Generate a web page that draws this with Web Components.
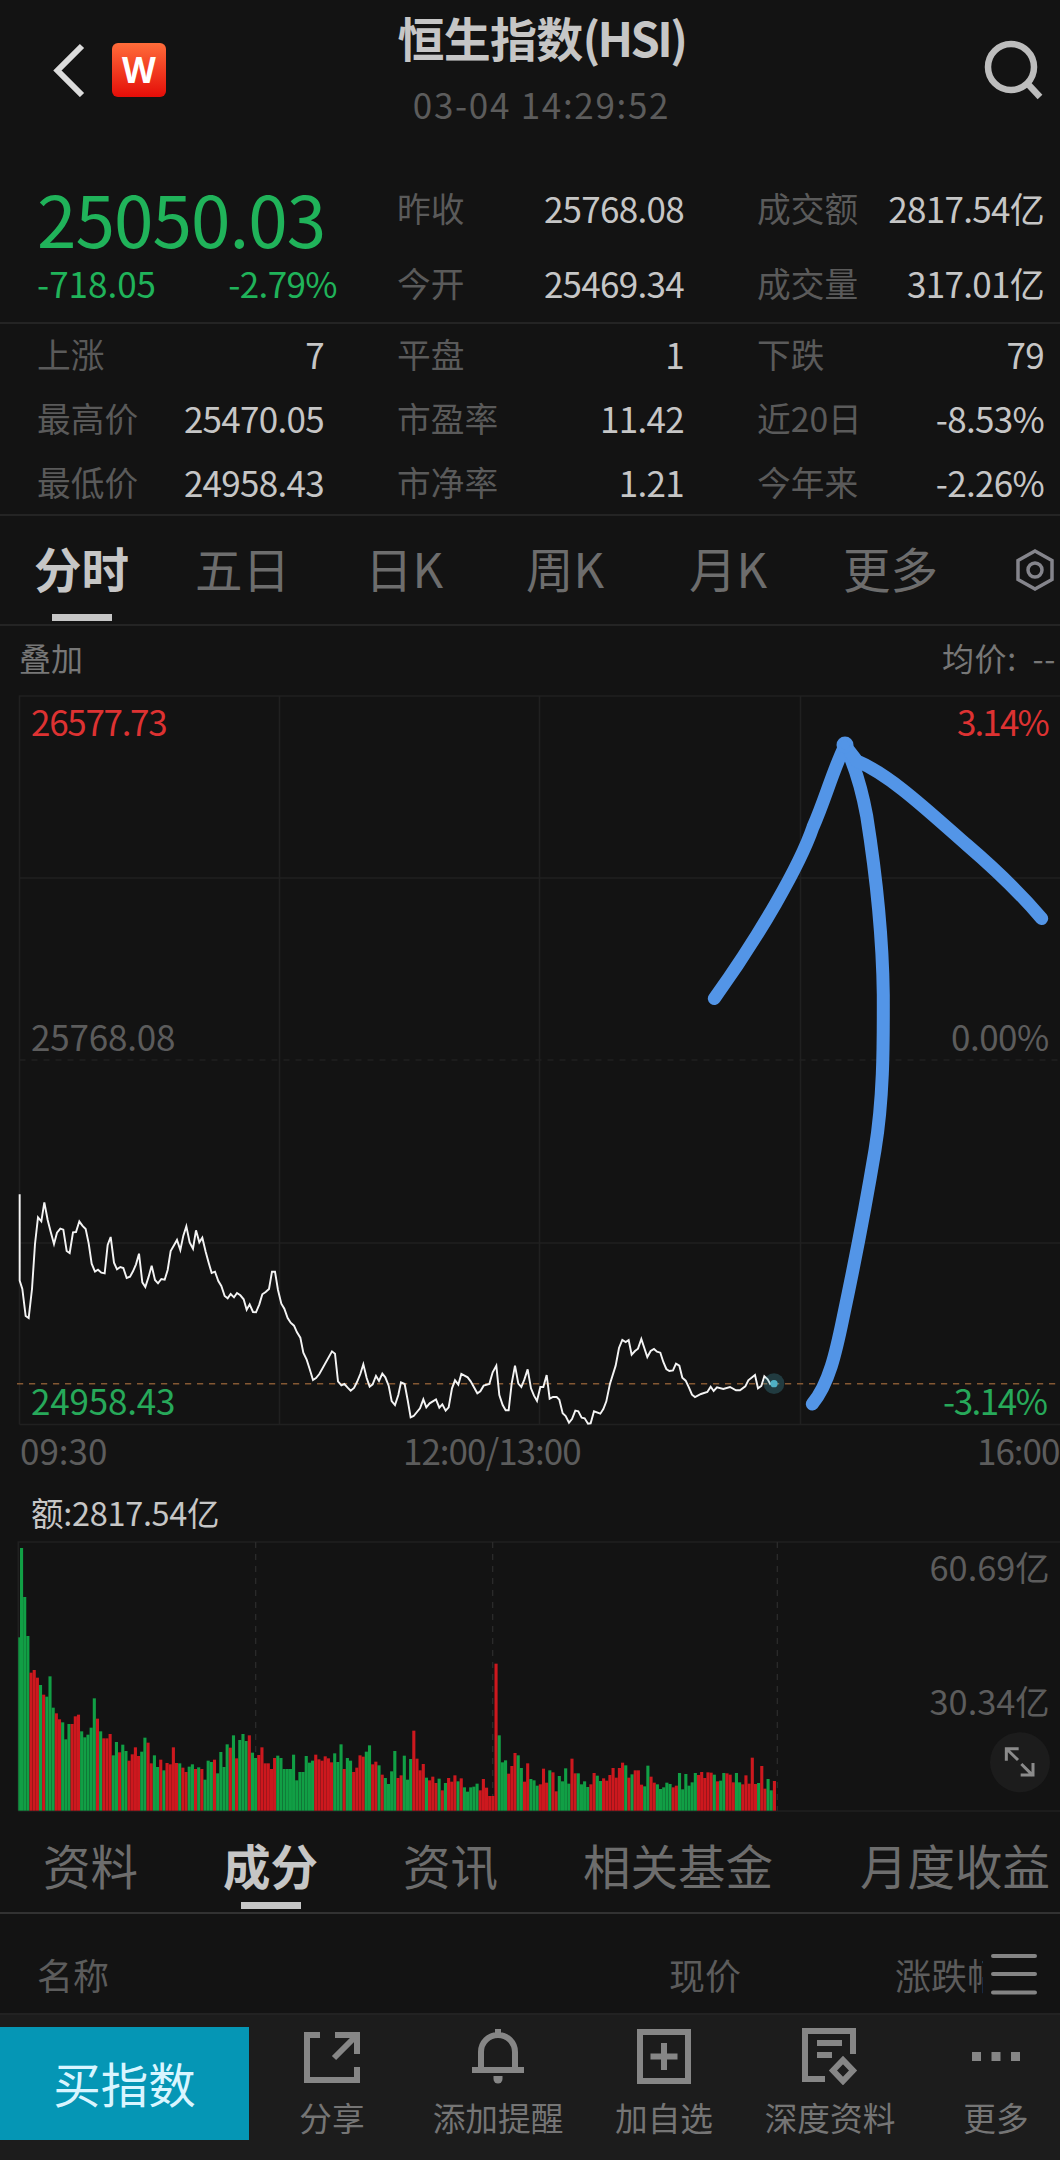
<!DOCTYPE html>
<html lang="zh-CN">
<head>
<meta charset="utf-8">
<title>恒生指数(HSI)</title>
<style>
	body {
		margin: 0;
		width: 1060px;
		height: 2160px;
		overflow: hidden;
		background: #131313;
		color: #c6c6c6;
		font-family: "Noto Sans CJK SC", "Noto Sans", sans-serif;
		font-size: 35px;
	}
</style>
</head>
<body>

<index-page></index-page>

<script>
// === HELPERS ===

function define(name, render){
	customElements.define(name, class extends HTMLElement {
		connectedCallback(){
			const shadow = this.attachShadow({ mode: 'open' })
			shadow.innerHTML = `<style>* { box-sizing: border-box; }</style>` + render(this)
		}
	})
}

// === DATA ===

// price polyline, in thirds of a pixel
const pricePoints = `59,103 59,362 67,387 77,468 86,474 96,387 105,252 114,172 124,184 133,127 143,180 152,215 162,252
171,218 181,206 190,209 200,273 209,279 219,217 228,216 238,184 247,197 257,207 266,250 275,311 285,335 294,329 304,338
314,340 323,255 332,231 342,308 351,328 361,321 370,324 380,354 390,350 399,334 408,313 417,281 427,367 436,381 446,350
455,317 465,360 474,370 484,357 494,359 503,330 512,273 522,256 531,240 541,270 550,227 559,199 569,247 579,266 588,211
598,247 607,233 617,275 626,308 635,339 645,335 655,363 664,378 674,408 683,415 692,402 702,412 711,399 721,406 731,418
740,449 749,433 759,456 768,457 778,433 787,403 797,396 807,387 816,335 825,335 834,390 844,431 853,446 863,474 872,488
882,497 891,517 901,533 910,578 920,599 929,627 939,660 948,654 958,642 996,574 1005,581 1014,664 1024,676 1033,672
1043,683 1052,692 1062,684 1071,666 1081,642 1090,613 1100,654 1109,680 1118,673 1128,648 1137,663 1147,641 1156,652
1166,677 1175,723 1185,735 1195,705 1203,667 1214,672 1223,720 1232,772 1241,768 1260,745 1270,718 1279,742 1289,730
1308,718 1318,743 1327,733 1337,752 1346,742 1356,685 1365,661 1375,674 1384,642 1403,652 1412,664 1432,700 1441,694
1451,677 1468,672 1478,637 1489,617 1498,705 1508,735 1517,751 1526,751 1535,671 1545,617 1555,671 1564,681 1573,659
1583,628 1593,685 1602,707 1611,723 1621,681 1630,681 1640,645 1649,716 1659,711 1670,711 1678,719 1688,760 1697,768
1707,788 1716,777 1726,752 1735,754 1745,773 1754,775 1764,791 1772,790 1782,754 1801,761 1810,747 1819,724 1830,671
1847,617 1857,564 1867,540 1877,546 1886,540 1895,584 1905,573 1914,566 1924,537 1942,591 1952,573 1962,567 1971,575
1981,578 1990,606 1999,627 2008,633 2019,631 2028,611 2038,617 2047,653 2057,662 2067,683 2076,704 2085,711 2103,702
2122,696 2132,680 2141,693 2151,682 2170,687 2190,681 2208,691 2220,691 2236,679 2245,661 2265,645 2274,685 2284,678
2293,649 2303,658 2312,674`

// one bar per minute: g = down, r = up, number is the top edge (the base is at 992)
const volumeBars = `g472 g204 g351 g468 r578 r570 r593 g615 r644 g650 g589 g683 r700 r718 g727 g778 g732 r732 r709 r704
g754 g772 g764 g743 g655 r716 g754 r775 r775 r762 g826 g786 r817 g794 g813 r842 r823 r802 r828 g815
g773 r788 r850 g826 g861 r839 g871 r849 r853 r802 r849 g850 r863 r876 g860 g853 r867 g862 r867 g899
g842 g846 r839 g880 g816 g861 g793 r803 g766 r835 g780 g762 g783 r766 g818 g834 r825 r802 r850 r850
r867 r834 g827 g834 g867 g867 g867 g824 g901 g876 g876 g828 g848 g842 r824 r838 r842 r829 r835 r847
g820 g846 g793 r867 g834 g842 r876 r863 r826 r830 g815 g796 r853 r845 g856 r884 g894 g912 g874 g813
r894 r886 g827 g899 g837 r752 r836 r871 r852 g893 r901 r890 r909 g896 r931 g909 r894 r905 r886 g904
r895 g922 g935 g922 g920 g911 r931 r897 r923 r948 r948 r551 g766 g847 g841 r881 r858 r819 g826 g864
r905 r850 g897 g901 g917 r913 r866 r908 g871 r877 r934 g888 g904 g865 g911 r836 r880 g880 g913 g904
g921 r913 r879 g887 g903 r895 r902 r885 r864 r893 r864 r848 g856 r893 g883 r871 r871 r914 g919 g857
r890 r908 g913 g927 g922 g908 g912 r922 r917 g879 g928 g882 g917 g907 g879 r885 r876 r894 r877 r878
g884 r904 g902 g879 r880 r884 r907 g879 g907 r913 r886 r911 r833 r912 g909 r858 r926 g897 g931 r903`.split(/\s+/)

// === ICONS ===

const icons = {
	share: `<path d="M18 10H5V55H55V42M33 10H55V29M53 12L32 33"/>`,
	bell: `<path d="M13 45V27a17 17 0 0 1 34 0V45M4 45H56M30 4V11"/><path d="M25.500 51h9v3a4.500 4.500 0 0 1-9 0z" fill="currentColor" stroke="none"/>`,
	plus: `<path d="M6 7H54V56H6zM30 18V45M16.500 31.500H43.500"/>`,
	report: `<path d="M53 29V6H5V54H25M17 18H42M17 30H32M43 35L53 45.500 43 56 33 45.500z"/>`,
	more: `<path d="M6 27h9v9H6zM25.500 27h9v9h-9zM45 27h9v9h-9z" fill="currentColor" stroke="none"/>`
}

// === TOP BAR ===

define('top-bar', () => `
	<style>
		:host {
			display: grid;
			grid-template-columns: 223px 1fr 200px;
			height: 142px;
		}
		.left { display: flex; align-items: flex-start; padding: 43px 0 0 50px; gap: 26px; }
		.badge {
			width: 54px;
			height: 54px;
			border-radius: 6px;
			background: linear-gradient(#ff6c3a, #e40d08);
			color: #fff;
			font: bold 35px/53px "Open Sans", sans-serif;
			text-align: center;
		}
		.middle { text-align: center; padding-top: 9px; white-space: nowrap; }
		.title { font-weight: 700; font-size: 47px; line-height: 56px; letter-spacing: -.8px; }
		.time { margin-top: 19px; line-height: 40px; color: #5c5c5c; letter-spacing: 1.7px; }
		.right { display: flex; justify-content: flex-end; padding: 38px 14px 0 0; }
	</style>
	<div class="left">
		<svg width="36" height="54" fill="none" stroke="#dcdcdc" stroke-width="6"><path d="M32 3L7.500 27.500 32 52"/></svg>
		<div class="badge">W</div>
	</div>
	<div class="middle">
		<div class="title"><slot name="title"></slot></div>
		<div class="time"><slot name="time"></slot></div>
	</div>
	<div class="right">
		<svg width="64" height="64" fill="none" stroke="#bdbdbd" stroke-width="6.500"><circle cx="29" cy="29" r="23"/><path d="M45 45L58 59"/></svg>
	</div>`)

// === STATS ===

define('stat-item', host => `
	<style>
		:host { display: flex; justify-content: space-between; align-items: center; white-space: nowrap; }
		.label { color: #5a5a5a; font-size: 33.700px; }
		.value { letter-spacing: -.7px; }
	</style>
	<span class="label">${host.getAttribute('label')}</span>
	<span class="value"><slot></slot></span>`)

define('stat-grid', () => `
	<style>
		:host {
			display: grid;
			grid-template-columns: repeat(3, 287px);
			grid-auto-rows: var(--row, 64px);
			column-gap: 73px;
			align-content: start;
			box-sizing: border-box;
			padding-left: 37px;
			border-bottom: 2px solid #242424;
		}
	</style>
	<slot></slot>`)

define('last-price', () => `
	<style>
		:host { display: block; grid-row: span 2; color: #20b35a; white-space: nowrap; }
		.price { margin-top: 10px; font-size: 71px; line-height: 75px; letter-spacing: -.9px; }
		.change { display: flex; justify-content: space-between; width: 300px; line-height: 56px; }
	</style>
	<div class="price"><slot name="price"></slot></div>
	<div class="change"><slot name="change"></slot><span style="letter-spacing:-.6px"><slot name="percent"></slot></span></div>`)

// === TABS ===

define('tab-item', () => `
	<style>
		:host { display: block; color: #6d6d6d; font-size: 47.500px; white-space: nowrap; }
		:host([active]) { color: #c6c6c6; font-weight: 700; }
		.tab { display: inline-flex; flex-direction: column; align-items: center; line-height: 72px; }
		:host([active]) .tab::after {
			content: "";
			width: 60px;
			height: 7px;
			margin-top: var(--bar-gap, 10px);
			background: #c6c6c6;
		}
	</style>
	<div class="tab"><span><slot></slot></span></div>`)

define('tab-bar', () => `
	<style>
		:host {
			display: grid;
			box-sizing: border-box;
			border-bottom: 2px solid var(--line, #242424);
		}
	</style>
	<slot></slot>`)

// === CHARTS ===

define('chart-caption', () => `
	<style>
		:host { display: flex; justify-content: space-between; height: 64px; line-height: 63px; font-size: 32px; color: #777; white-space: nowrap; overflow: hidden; }
		.average { width: 118px; word-spacing: 8px; letter-spacing: .6px; }
	</style>
	<span style="padding-left:19px"><slot></slot></span>
	<span class="average"><slot name="average"></slot></span>`)

define('price-chart', () => `
	<style>
		:host { display: block; }
		svg { display: block; }
		.grid { stroke: #202020; stroke-width: 1.500; fill: none; }
		.times { display: grid; grid-template-columns: 383px 574px 1fr; height: 50px; line-height: 40px; color: #5c5c5c; padding-left: 20px; white-space: nowrap; letter-spacing: -1px; }
		.times span:first-child { letter-spacing: 0; }
	</style>
	<svg width="1060" height="740" viewBox="0 690 1060 740">
		<path class="grid" d="M19.500 1424.500V696H1060M19.500 878H1060M19.500 1243H1060M19.500 1424.500H1060M279.500 696V1424.500M539.500 696V1424.500M800.500 696V1424.500"/>
		<path class="grid" d="M19.500 1060H1060" stroke-dasharray="6 6"/>
		<path d="M17 1383.700H1060" stroke="#845833" stroke-width="1.600" stroke-dasharray="6.200 5.800"/>
		<g transform="translate(0 1160) scale(.33333)">
			<polyline points="${pricePoints}" fill="none" stroke="#f4f4f4" stroke-width="5.800"/>
			<circle cx="2322" cy="671" r="31" fill="#4db2c6" fill-opacity=".25"/>
			<circle cx="2322" cy="671" r="11" fill="#4fb0c4"/>
		</g>
		<g font-size="35">
			<text x="31" y="736" fill="#dd3232" letter-spacing="-1.300">26577.73</text>
			<text x="31" y="1050.500" fill="#5c5c5c" letter-spacing="-.200">25768.08</text>
			<text x="31" y="1415" fill="#27a95a" letter-spacing="-.200">24958.43</text>
			<text x="957" y="736" fill="#dd3232" letter-spacing="-1.900">3.14%</text>
			<text x="951" y="1050.500" fill="#5c5c5c" letter-spacing="-.500">0.00%</text>
			<text x="943" y="1415" fill="#27a95a" letter-spacing="-1.500">-3.14%</text>
		</g>
		<g fill="none" stroke="#5395e7" stroke-width="13" stroke-linecap="round" stroke-linejoin="round">
			<path d="M812.300 1404C829 1384 836 1352 843 1318C850 1285 865 1210 875 1150C884 1095 883.300 1040 883.300 995C882.500 930 874 862 866.700 816C861 785 854 764 845 745.500"/>
			<path d="M714.300 998.500C760 935 800 865 813 827C825 800 833 770 845 745.500"/>
			<path d="M845 745.500L857 761C890 775 925 808 967 845C995 869 1020 893 1041.700 918.500"/>
			<circle cx="845" cy="745" r="2"/>
		</g>
	</svg>
	<div class="times"><span>09:30</span><span>12:00/13:00</span><span>16:00</span></div>`)

define('volume-chart', () => {
	const pitch = 9.49
	const bars = volumeBars.map((bar, i) => {
		// first bar is cut by the left axis
		const x = Math.max(55, 60 + (i - 1) * pitch)
		const right = 60 + i * pitch - .2
		const y = Number(bar.slice(1))
		const color = bar[0] === 'g' ? '#119f45' : '#cd181e'
		return `<rect x="${x.toFixed(1)}" y="${y}" width="${(right - x).toFixed(1)}" height="${992 - y}" fill="${color}"/>`
	}).join('')

	return `
	<style>
		:host { display: block; }
		.total { height: 61px; line-height: 63px; padding-left: 31px; font-size: 32.500px; }
		.total span { letter-spacing: -.3px; }
		svg { display: block; }
	</style>
	<div class="total"><span><slot></slot></span></div>
	<svg width="1060" height="272" viewBox="0 183 3180 816">
		<path d="M55 992V186H3180M55 993H3180" fill="none" stroke="#202020" stroke-width="5"/>
		<path d="M767 186V992M1478 186V992M2332 186V992" stroke="#2a2a2a" stroke-width="4" stroke-dasharray="18 18"/>
		${bars}
		<g font-size="103" fill="#5c5c5c" text-anchor="end">
			<text x="3149" y="304">60.69亿</text>
			<text x="3149" y="706">30.34亿</text>
		</g>
		<circle cx="3060" cy="847" r="90" fill="#1c1c1c"/>
		<path d="M3056 806H3019V842M3020 807L3054 840M3064 852L3099 887M3062 885H3099V849" fill="none" stroke="#8b8b8b" stroke-width="9"/>
	</svg>`
})

// === TABLE HEAD ===

define('table-head', () => `
	<style>
		:host {
			display: grid;
			grid-template-columns: 632px 226px 88px 1fr;
			align-items: center;
			height: 99px;
			box-sizing: border-box;
			padding: 21px 0 0 37px;
			color: #5c5c5c;
			font-size: 36px;
			line-height: 50px;
			white-space: nowrap;
		}
		.cut { overflow: hidden; }
		svg { display: block; margin-left: 8px; }
	</style>
	<span>名称</span><span>现价</span><span class="cut">涨跌幅</span>
	<svg width="46" height="44" stroke="#858585" stroke-width="4" stroke-linecap="round"><path d="M2 4H44M2 22H44M2 40.500H44"/></svg>`)

// === BOTTOM BAR ===

define('bar-action', host => `
	<style>
		:host { flex: none; width: 166px; display: flex; flex-direction: column; align-items: center; color: #868686; }
		svg { display: block; margin-top: 10px; }
		span { margin-top: 9px; font-size: 32.700px; line-height: 46px; color: #757575; white-space: nowrap; }
	</style>
	<svg width="60" height="60" fill="none" stroke="currentColor" stroke-width="6">${icons[host.getAttribute('icon')]}</svg>
	<span><slot></slot></span>`)

define('bottom-bar', () => `
	<style>
		:host {
			display: flex;
			box-sizing: border-box;
			height: 148px;
			overflow: hidden;
			background: #1c1c1c;
			border-top: 2px solid #222;
		}
		button {
			all: unset;
			flex: none;
			width: 249px;
			height: 113px;
			margin-top: 12px;
			box-sizing: border-box;
			padding-bottom: 2px;
			background: #0596b5;
			color: #d9f5ff;
			font-size: 47.500px;
			line-height: 110px;
			text-align: center;
		}
	</style>
	<button><slot name="buy"></slot></button>
	<slot></slot>`)

// === PAGE ===

define('index-page', () => `
	<style>
		:host { display: flex; flex-direction: column; width: 1060px; }
		.summary { height: 182px; padding-top: 28px; --row: 75px; }
		.breadth { height: 195px; margin-top: -3px; }
		.summary, .breadth { flex: none; }
		.periods {
			grid-template-columns: 161px 170px 161px 163px 154px 172px 1fr;
			height: 110px;
			padding: 16px 0 0 34px;
		}
		.periods svg { margin-top: 16px; }
		.sections {
			grid-template-columns: 180px 180px 180px 277px 1fr;
			height: 101px;
			padding: 16px 0 0 43px;
			--line: #323232;
			--bar-gap: 1px;
		}
	</style>
	<top-bar>
		<span slot="title">恒生指数<span style="letter-spacing:-2.600px">(HSI)</span></span>
		<span slot="time">03-04 14:29:52</span>
	</top-bar>
	<stat-grid class="summary">
		<last-price>
			<span slot="price">25050.03</span>
			<span slot="change">-718.05</span>
			<span slot="percent">-2.79%</span>
		</last-price>
		<stat-item label="昨收">25768.08</stat-item>
		<stat-item label="成交额">2817.54亿</stat-item>
		<stat-item label="今开">25469.34</stat-item>
		<stat-item label="成交量">317.01亿</stat-item>
	</stat-grid>
	<stat-grid class="breadth">
		<stat-item label="上涨">7</stat-item>
		<stat-item label="平盘">1</stat-item>
		<stat-item label="下跌">79</stat-item>
		<stat-item label="最高价">25470.05</stat-item>
		<stat-item label="市盈率">11.42</stat-item>
		<stat-item label="近20日">-8.53%</stat-item>
		<stat-item label="最低价">24958.43</stat-item>
		<stat-item label="市净率">1.21</stat-item>
		<stat-item label="今年来">-2.26%</stat-item>
	</stat-grid>
	<tab-bar class="periods">
		<tab-item active>分时</tab-item>
		<tab-item>五日</tab-item>
		<tab-item>日K</tab-item>
		<tab-item>周K</tab-item>
		<tab-item>月K</tab-item>
		<tab-item>更多</tab-item>
		<svg width="42" height="44" fill="none" stroke="#85858c" stroke-width="3.500"><path d="M20 3L37 12.500V31.500L20 41 3 31.500V12.500z"/><circle cx="20" cy="22" r="7"/></svg>
	</tab-bar>
	<chart-caption>叠加<span slot="average">均价: --</span></chart-caption>
	<price-chart></price-chart>
	<volume-chart>额:2817.54亿</volume-chart>
	<tab-bar class="sections">
		<tab-item>资料</tab-item>
		<tab-item active>成分</tab-item>
		<tab-item>资讯</tab-item>
		<tab-item>相关基金</tab-item>
		<tab-item>月度收益</tab-item>
	</tab-bar>
	<table-head></table-head>
	<bottom-bar>
		<span slot="buy">买指数</span>
		<bar-action icon="share">分享</bar-action>
		<bar-action icon="bell">添加提醒</bar-action>
		<bar-action icon="plus">加自选</bar-action>
		<bar-action icon="report">深度资料</bar-action>
		<bar-action icon="more">更多</bar-action>
	</bottom-bar>`)
</script>
</body>
</html>
